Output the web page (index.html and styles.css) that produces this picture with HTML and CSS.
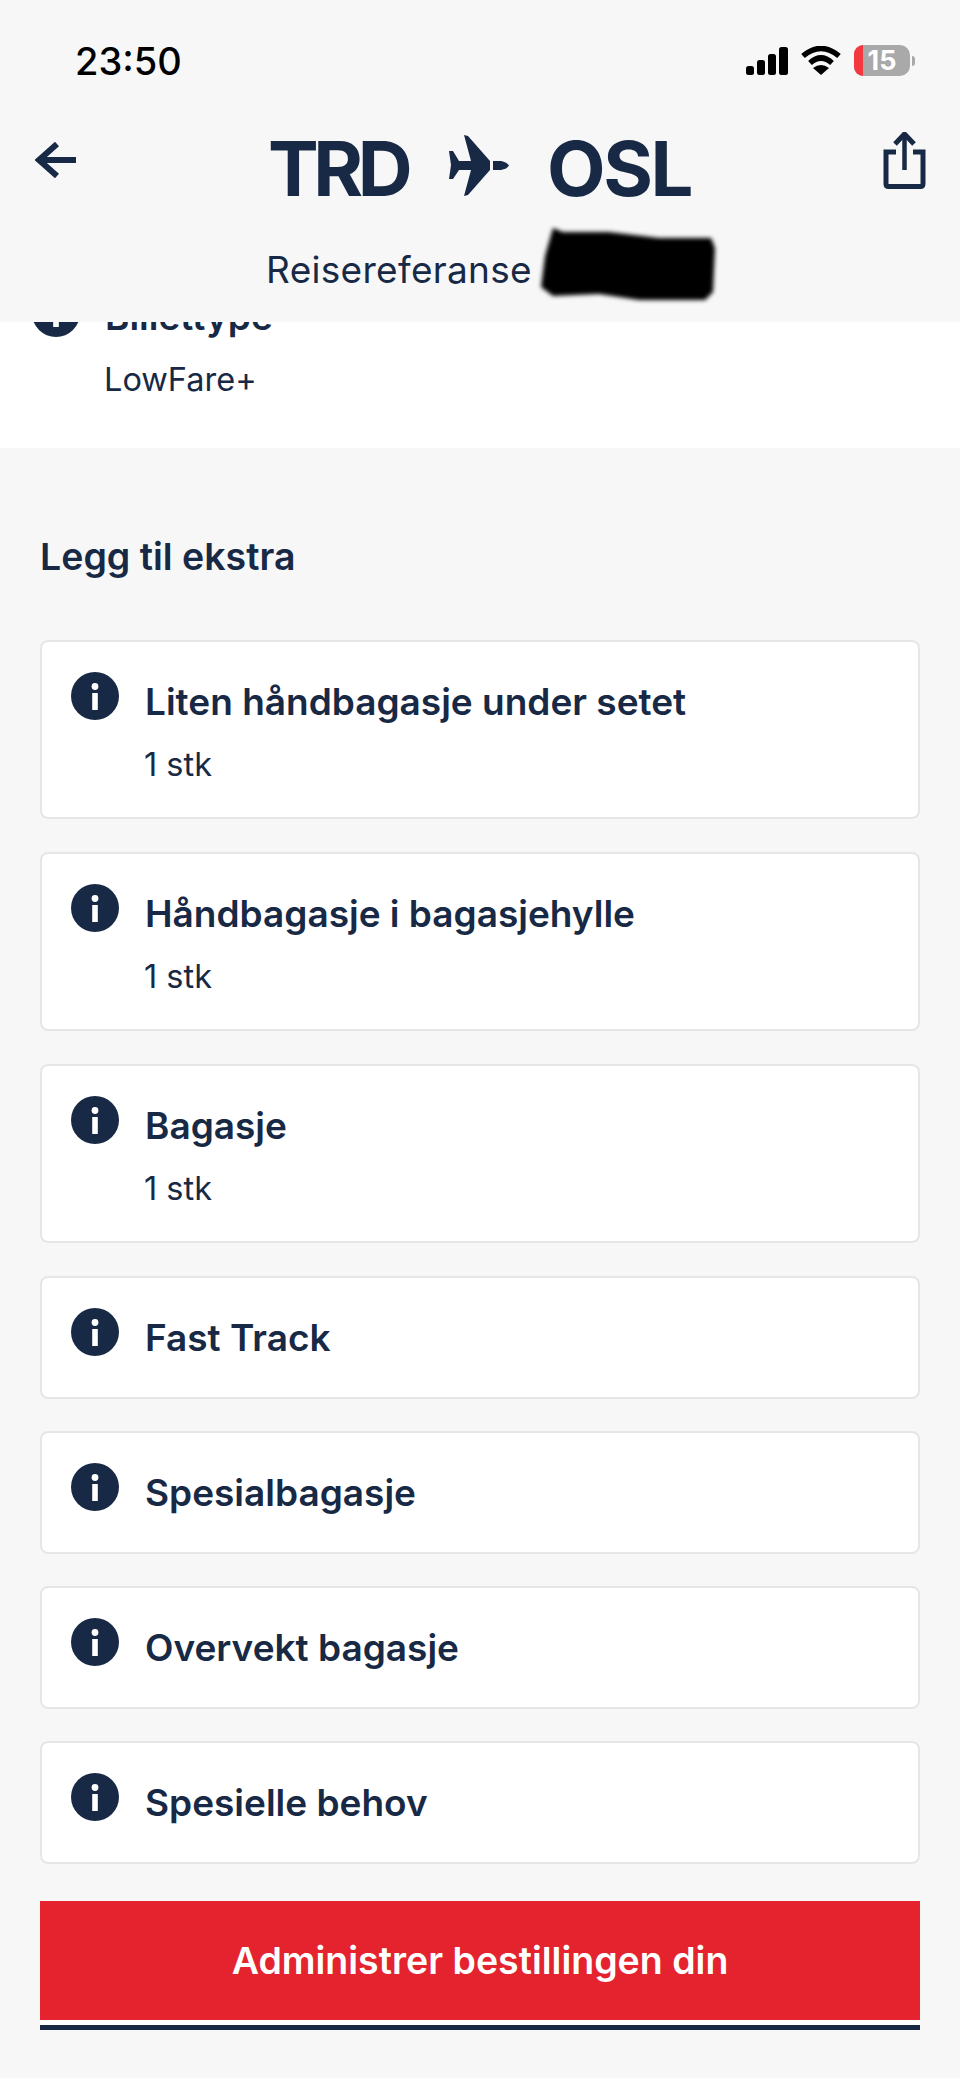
FILE: index.html
```html
<!DOCTYPE html>
<html>
<head>
<meta http-equiv="Content-Type" content="text/html; charset=utf-8"/>
<title>TRD - OSL</title>
<link rel="stylesheet" href="styles.css">
</head>

<body>
<div class="page">

<header class="top">
  <div class="status">
    <span class="time">23:50</span>
    <div class="status-icons">
      <svg class="signal" width="42" height="28" viewBox="0 0 42 28">
        <rect x="0" y="19" width="8" height="9" rx="2.5"/>
        <rect x="11" y="13" width="8" height="15" rx="2.5"/>
        <rect x="22" y="7" width="8" height="21" rx="2.5"/>
        <rect x="33" y="0" width="9" height="28" rx="2.5"/>
      </svg>
      <svg class="wifi" width="40" height="29" viewBox="0 0 40 29">
        <path d="M2 10 Q20 -5 38 10" fill="none" stroke="#000" stroke-width="5.5"/>
        <path d="M9 17 Q20 7 31 17" fill="none" stroke="#000" stroke-width="5.5"/>
        <path d="M20 29 L12 22 Q20 16 28 22 Z"/>
      </svg>
      <div class="battery">
        <div class="battery-body"><span class="battery-low"></span><span class="battery-num">15</span></div>
        <span class="battery-nub"></span>
      </div>
    </div>
  </div>

  <div class="route">
    <svg class="back" width="41" height="36" viewBox="0 0 41 36">
      <path d="M22 2 L4 18 L22 34 M4 18 H41" fill="none" stroke="#182945" stroke-width="6"/>
    </svg>
    <h1 class="title">
      <span class="code">TRD</span>
      <svg class="plane" width="60" height="61" viewBox="0 0 60 61">
        <path d="M15 0 L19 1 L41 26 L41 35 L19 60 L15 61 L22 35 L10 35 L4 44 L0 44 L2 30 L0 16 L4 16 L10 26 L22 26 Z M44 26 H52 Q58 27 60 30.5 Q58 34 52 35 H44 Z" fill="#182945"/>
      </svg>
      <span class="code wide">OSL</span>
    </h1>
    <svg class="share" width="43" height="57" viewBox="0 0 43 57">
      <path d="M13 20 H3 V52 Q3 54.500 5.500 54.500 H37.500 Q40 54.500 40 52 V20 H30" fill="none" stroke="#182945" stroke-width="5"/>
      <path d="M21.500 4 V38" fill="none" stroke="#182945" stroke-width="4.500"/>
      <path d="M12 12 L21.500 2 L31 12" fill="none" stroke="#182945" stroke-width="5"/>
    </svg>
  </div>

  <div class="ref">
    <span class="ref-label">Reisereferanse</span>
    <svg class="redacted" width="177" height="80" viewBox="0 0 177 80">
      <path d="M14 4 L24 8 L70 8 L120 14 L172 14 L176 24 L174 68 L166 76 L100 76 L60 70 L14 72 L2 63 L6 32 Z" fill="#000"/>
    </svg>
  </div>
</header>

<section class="ticket">
  <div class="ticket-row">
    <svg class="info" width="48" height="48" viewBox="0 0 48 48">
      <circle cx="24" cy="24" r="24" fill="#182945"/>
      <circle cx="24" cy="14.500" r="3.400" fill="#fff"/>
      <rect x="21.200" y="21" width="5.600" height="17" fill="#fff"/>
    </svg>
    <div class="card-text">
      <div class="name">Billettype</div>
      <div class="value">LowFare+</div>
    </div>
  </div>
</section>

<main class="extras">
  <h2>Legg til ekstra</h2>

  <div class="card">
    <svg class="info" width="48" height="48" viewBox="0 0 48 48">
      <circle cx="24" cy="24" r="24" fill="#182945"/>
      <circle cx="24" cy="14.500" r="3.400" fill="#fff"/>
      <rect x="21.200" y="21" width="5.600" height="17" fill="#fff"/>
    </svg>
    <div class="card-text">
      <div class="name">Liten håndbagasje under setet</div>
      <div class="value">1 stk</div>
    </div>
  </div>

  <div class="card">
    <svg class="info" width="48" height="48" viewBox="0 0 48 48">
      <circle cx="24" cy="24" r="24" fill="#182945"/>
      <circle cx="24" cy="14.500" r="3.400" fill="#fff"/>
      <rect x="21.200" y="21" width="5.600" height="17" fill="#fff"/>
    </svg>
    <div class="card-text">
      <div class="name">Håndbagasje i bagasjehylle</div>
      <div class="value">1 stk</div>
    </div>
  </div>

  <div class="card">
    <svg class="info" width="48" height="48" viewBox="0 0 48 48">
      <circle cx="24" cy="24" r="24" fill="#182945"/>
      <circle cx="24" cy="14.500" r="3.400" fill="#fff"/>
      <rect x="21.200" y="21" width="5.600" height="17" fill="#fff"/>
    </svg>
    <div class="card-text">
      <div class="name">Bagasje</div>
      <div class="value">1 stk</div>
    </div>
  </div>

  <div class="card small">
    <svg class="info" width="48" height="48" viewBox="0 0 48 48">
      <circle cx="24" cy="24" r="24" fill="#182945"/>
      <circle cx="24" cy="14.500" r="3.400" fill="#fff"/>
      <rect x="21.200" y="21" width="5.600" height="17" fill="#fff"/>
    </svg>
    <div class="card-text"><div class="name">Fast Track</div></div>
  </div>

  <div class="card small">
    <svg class="info" width="48" height="48" viewBox="0 0 48 48">
      <circle cx="24" cy="24" r="24" fill="#182945"/>
      <circle cx="24" cy="14.500" r="3.400" fill="#fff"/>
      <rect x="21.200" y="21" width="5.600" height="17" fill="#fff"/>
    </svg>
    <div class="card-text"><div class="name">Spesialbagasje</div></div>
  </div>

  <div class="card small">
    <svg class="info" width="48" height="48" viewBox="0 0 48 48">
      <circle cx="24" cy="24" r="24" fill="#182945"/>
      <circle cx="24" cy="14.500" r="3.400" fill="#fff"/>
      <rect x="21.200" y="21" width="5.600" height="17" fill="#fff"/>
    </svg>
    <div class="card-text"><div class="name">Overvekt bagasje</div></div>
  </div>

  <div class="card small">
    <svg class="info" width="48" height="48" viewBox="0 0 48 48">
      <circle cx="24" cy="24" r="24" fill="#182945"/>
      <circle cx="24" cy="14.500" r="3.400" fill="#fff"/>
      <rect x="21.200" y="21" width="5.600" height="17" fill="#fff"/>
    </svg>
    <div class="card-text"><div class="name">Spesielle behov</div></div>
  </div>

  <a class="manage">Administrer bestillingen din</a>
</main>

</div>
</body>
</html>
```

FILE: styles.css
```css
html, body {
  margin: 0;
  padding: 0;
}

body {
  font-family: Inter, "Liberation Sans", sans-serif;
  background-color: #f7f7f8;
  color: #182945;
}

.page {
  width: 960px;
  height: 2078px;
  overflow: hidden;
}

/* top bar */
.top {
  height: 322px;
  box-sizing: border-box;
  padding-top: 44px;
}

.status {
  display: flex;
  justify-content: space-between;
  align-items: center;
  height: 33px;
  padding: 0 45px 0 75px;
}

.time {
  font-size: 38px;
  font-weight: 500;
  color: #000;
}

.status-icons {
  display: flex;
  align-items: center;
  gap: 13px;
}

.battery {
  display: flex;
  align-items: center;
  gap: 2px;
}

.battery-body {
  position: relative;
  width: 56px;
  height: 31px;
  border-radius: 10px;
  background-color: #a9a9a9;
  text-align: center;
}

.battery-low {
  position: absolute;
  left: 0;
  top: 0;
  bottom: 0;
  width: 9px;
  border-radius: 10px 0 0 10px;
  background-color: #f4383f;
}

.battery-num {
  position: relative;
  font-size: 27px;
  line-height: 31px;
  font-weight: 700;
  color: #fff;
}

.battery-nub {
  width: 3px;
  height: 10px;
  border-radius: 0 3px 3px 0;
  background-color: #a9a9a9;
}

.route {
  display: flex;
  justify-content: space-between;
  align-items: center;
  height: 66px;
  margin-top: 53px;
  padding: 0 34px 0 35px;
}

.title {
  display: flex;
  align-items: center;
  gap: 40px;
  margin: 5px 0 0;
  font-size: 76px;
  line-height: 66px;
  font-weight: 700;
  letter-spacing: -5.5px;
}

.code {
  padding-top: 5px;
}

.code.wide {
  letter-spacing: -2.5px;
}

.plane {
  margin: 0 -2px 0 2px;
}

.back {
  margin-bottom: 6px;
}

.share {
  margin-bottom: 6px;
}

.ref {
  display: flex;
  align-items: center;
  justify-content: center;
  gap: 7px;
  height: 80px;
  margin-top: 28px;
  padding-left: 22px;
  font-size: 37px;
  letter-spacing: 0.3px;
}

.ref-label {
  margin-top: 10px;
}

.redacted {
  filter: blur(2px);
}

/* white block cut off by the top bar */
.ticket {
  height: 126px;
  background-color: #fff;
  overflow: hidden;
}

.ticket-row {
  display: flex;
  gap: 25px;
  margin-top: -33px;
  padding-left: 32px;
}

.ticket-row .card-text {
  padding-top: 5px;
}

.extras {
  padding: 0 40px;
}

h2 {
  margin: 0;
  padding: 86px 0 60px;
  font-size: 37.5px;
  line-height: 46px;
  font-weight: 600;
}

.card {
  display: flex;
  gap: 26px;
  box-sizing: border-box;
  height: 179px;
  margin-bottom: 33px;
  padding: 30px 29px;
  background-color: #fff;
  border: 2px solid #e6e6e6;
  border-radius: 8px;
}

.card.small {
  height: 123px;
  margin-bottom: 32px;
}

.info {
  flex: none;
}

.card-text {
  padding-top: 7px;
}

.name {
  font-size: 37px;
  line-height: 46px;
  font-weight: 600;
}

.value {
  margin: 20px 0 0 -1px;
  font-size: 32.5px;
  line-height: 40px;
}

.manage {
  display: block;
  height: 119px;
  margin-top: 37px;
  background-color: #e4232e;
  color: #fff;
  font-size: 37.5px;
  line-height: 119px;
  font-weight: 600;
  text-align: center;
  border-bottom: 5px solid #fff;
  box-shadow: 0 5px 0 0 #182945;
}
```
